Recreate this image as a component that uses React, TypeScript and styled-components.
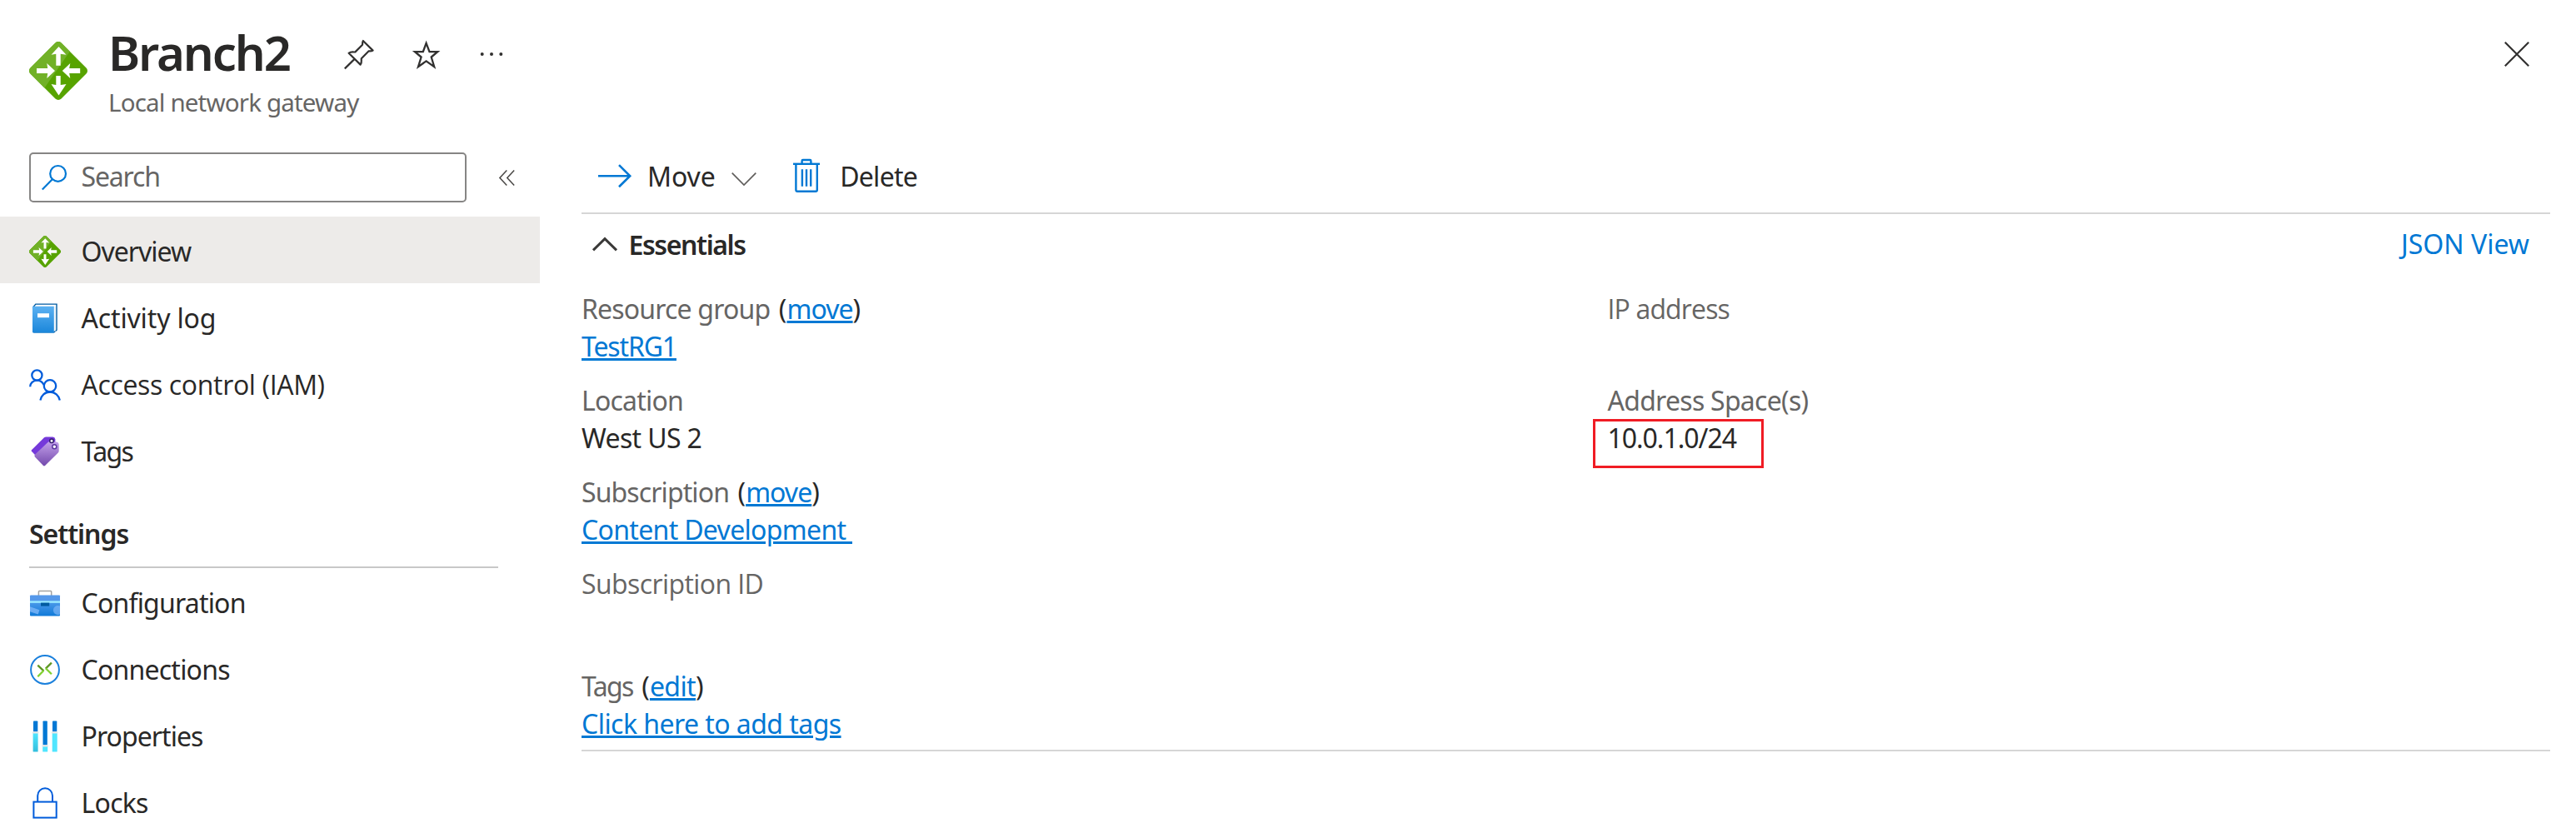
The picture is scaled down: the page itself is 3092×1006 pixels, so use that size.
import React from "react";
import styled, { createGlobalStyle } from "styled-components";

const ink = "#292827";
const muted = "#666564";
const link = "#0078d4";
const outline = "#005cdb";

const GlobalStyle = createGlobalStyle`
  *, *::before, *::after { box-sizing: border-box; }
  body {
    margin: 0;
    background: #fff;
    color: ${ink};
    font-family: "Noto Sans", "Open Sans", sans-serif;
    font-size: 32px;
    line-height: 45px;
  }
  svg { display: block; flex: none; overflow: visible; }
`;

const Page = styled.div`
  width: 3092px;
  height: 1006px;
  overflow: hidden;
  display: flex;
  flex-direction: column;
`;

const Text = styled.span<{ $track?: number; $plainCaps?: boolean }>`
  letter-spacing: ${(p) => p.$track ?? 0}px;
  font-family: ${(p) => (p.$plainCaps ? '"Open Sans", sans-serif' : "inherit")};
  white-space: pre;
`;

/* ---------- header ---------- */

const Header = styled.header`
  display: flex;
  align-items: flex-start;
  height: 183px;
  padding: 23px 56px 0 35px;
`;

const HeaderLogo = styled.div`
  width: 95px;
  padding-top: 27px;
`;

const Heading = styled.div`
  display: flex;
  flex-direction: column;
  flex: 1;
`;

const TitleRow = styled.div`
  display: flex;
  align-items: flex-start;
  height: 79px;
`;

const Title = styled.h1`
  margin: 0;
  width: 283px;
  font-size: 58px;
  line-height: 79px;
  font-weight: 600;
  letter-spacing: -2.1px;
`;

const Actions = styled.div`
  display: flex;
  align-items: center;
  gap: 44.5px;
  padding-top: 24px;
`;

const Subtitle = styled.div`
  font-size: 29.5px;
  line-height: 41px;
  letter-spacing: -0.82px;
  color: ${muted};
`;

const CloseButton = styled.div`
  padding-top: 27px;
`;

/* ---------- sidebar ---------- */

const Body = styled.div`
  display: flex;
  flex: 1;
  min-height: 0;
`;

const Sidebar = styled.aside`
  width: 648px;
  flex: none;
`;

const SearchRow = styled.div`
  display: flex;
  align-items: center;
  height: 60px;
  margin-bottom: 17px;
  padding-left: 35px;
  gap: 39px;
`;

const SearchBox = styled.div`
  display: flex;
  align-items: center;
  width: 525px;
  height: 60px;
  padding-left: 13px;
  border: 2px solid #868584;
  border-radius: 5px;
  color: ${muted};
`;

const SearchText = styled(Text)`
  margin-left: 17.5px;
  padding-bottom: 3px;
`;

const NavItem = styled.div<{ $selected?: boolean }>`
  display: flex;
  align-items: center;
  gap: 24.5px;
  height: 80px;
  padding: 3px 0 0 35px;
  background: ${(p) => (p.$selected ? "#edebe9" : "transparent")};
`;

const SectionHeading = styled.div`
  width: 563px;
  height: 102px;
  margin-left: 35px;
  padding-top: 38px;
  border-bottom: 2px solid #c8c8c8;
  font-weight: 600;
`;

/* ---------- main pane ---------- */

const Main = styled.main`
  width: 2363px;
  margin-left: 50px;
`;

const Toolbar = styled.div`
  display: flex;
  align-items: center;
  height: 74px;
  padding: 0 0 15px 20px;
  border-bottom: 2px solid #d6d6d6;
`;

const Command = styled.div`
  display: flex;
  align-items: center;
  margin-right: 44px;
`;

const CommandLabel = styled(Text)<{ $gap: number }>`
  margin-left: ${(p) => p.$gap}px;
`;

const CommandChevron = styled.div`
  padding: 7px 0 0 19.5px;
`;

const CommandIcon = styled.div`
  padding-bottom: 2px;
`;

const EssentialsBar = styled.div`
  display: flex;
  align-items: center;
  height: 73px;
  margin-bottom: 18px;
  padding: 0 25px 0 13px;
`;

const EssentialsTitle = styled(Text)`
  flex: 1;
  margin-left: 13.5px;
  font-weight: 600;
`;

const JsonLink = styled(Text)`
  padding-bottom: 2px;
  color: ${link};
`;

const Properties = styled.div`
  display: grid;
  grid-template-columns: 1231.5px 1fr;
  height: 554px;
  border-bottom: 2px solid #d6d6d6;
`;

const Column = styled.div`
  display: flex;
  flex-direction: column;
  gap: 20px;
`;

const FieldBlock = styled.div<{ $spaced?: boolean }>`
  display: flex;
  flex-direction: column;
  align-items: flex-start;
  height: 90px;
  margin-top: ${(p) => (p.$spaced ? 13 : 0)}px;
`;

const FieldLabel = styled.div`
  display: flex;
  color: ${muted};
`;

const FieldAction = styled.span`
  margin-left: 10.5px;
  color: ${ink};
`;

const Link = styled.a<{ $track: number }>`
  color: ${link};
  letter-spacing: ${(p) => p.$track}px;
  white-space: pre;
  text-decoration: underline;
  text-decoration-thickness: 3px;
  text-underline-offset: 2px;
`;

const Highlighted = styled.div`
  position: relative;
`;

const HighlightBox = styled.div`
  position: absolute;
  top: 0;
  left: -17.5px;
  width: 205px;
  height: 59px;
  border: 3px solid #f01c24;
`;

/* ---------- icons ---------- */

function GatewayIcon({ size, id }: { size: number; id: string }) {
  return (
    <svg width={size} height={size} viewBox="0 0 70 70">
      <clipPath id={id}>
        <rect x="8.8" y="8.8" width="52.4" height="52.4" rx="5" transform="rotate(45 35 35)" />
      </clipPath>
      <g clipPath={`url(#${id})`}>
        <rect width="70" height="70" fill="#57a300" />
        <path d="M0 0H57L14 62L0 70Z" fill="#71b127" />
      </g>
      <g fill="#fff">
        <path d="M35.5 6L44.5 15.7L37.7 14.8V28.7H32.3V14.8L26.5 15.7Z" />
        <path d="M35.5 64.5L44.5 51L37.7 52V41H32.3V52L26.5 51Z" />
        <path d="M31 35L21.3 44L22.2 38H9V32H22.2L21.3 26Z" />
        <path d="M39.8 35L49.3 44L48.2 38H61.2V32H48.2L49.3 26Z" />
      </g>
    </svg>
  );
}

const PinIcon = () => (
  <svg width="36" height="36" viewBox="0 0 36 36" fill="none" stroke="#323130" strokeWidth="2.2">
    <path
      d="M22.8 2L34.6 13.6C32.6 14.8 31 14.2 29.4 14.4L20.8 23.2C20.4 25.8 21.8 27.6 19.6 30.6L5.6 16.8C8.2 14.6 10.6 15.8 13.4 15.4L22 6.8C22.4 5.2 21.6 3.8 22.8 2Z"
      strokeLinejoin="round"
    />
    <path d="M12.8 23.6L0.8 35.4" />
  </svg>
);

const StarIcon = () => (
  <svg width="36" height="36" viewBox="0 0 36 36" fill="none" stroke="#323130" strokeWidth="2.3">
    <path
      d="M17.6 4.8L21.5 15.2H31.2L23.7 21.5L27.2 33.2L17.6 26.4L8 33.2L11.6 21.5L4 15.2H13.8Z"
      strokeMiterlimit="10"
    />
  </svg>
);

const MoreIcon = () => (
  <svg width="32" height="6" viewBox="0 0 32 6" fill="#323130">
    <circle cx="4.7" cy="3" r="2" />
    <circle cx="16" cy="3" r="2" />
    <circle cx="27.3" cy="3" r="2" />
  </svg>
);

const CloseIcon = () => (
  <svg width="30" height="30" viewBox="0 0 30 30" fill="none" stroke="#323130" strokeWidth="2.2">
    <path d="M0.8 0.8L29.2 29.2M29.2 0.8L0.8 29.2" />
  </svg>
);

const SearchIcon = () => (
  <svg width="30" height="30" viewBox="0 0 30 30" fill="none" stroke={link} strokeWidth="2.2">
    <circle cx="19.6" cy="10.4" r="9.4" />
    <path d="M12.8 17.2L0.8 29.4" />
  </svg>
);

const CollapseIcon = () => (
  <svg width="19" height="19" viewBox="0 0 19 19" fill="none" stroke="#484644" strokeWidth="1.5">
    <path d="M9.3 0.5L0.9 9.5L9.3 18.5M18.2 0.5L9.8 9.5L18.2 18.5" />
  </svg>
);

const BookIcon = () => (
  <svg width="38" height="38" viewBox="0 0 38 38">
    <defs>
      <linearGradient id="book" x1="0" y1="0" x2="0" y2="1">
        <stop offset="0" stopColor="#5bb1f2" />
        <stop offset="1" stopColor="#1a86da" />
      </linearGradient>
    </defs>
    <path d="M4.6 6L7.8 2.1H33V33.2L29.8 35.9H6Z" fill="#fff" stroke="#005ba1" strokeWidth="1.4" />
    <path d="M31.2 5V35" stroke="#d5e6f3" strokeWidth="0.8" />
    <path d="M4 4.8H29.8V36.6H5Q4 36.6 4 35.6Z" fill="url(#book)" />
    <rect x="10" y="13.2" width="14" height="5" fill="#fff" />
  </svg>
);

const PeopleIcon = () => (
  <svg width="38" height="38" viewBox="0 0 38 38" fill="none" stroke={outline} strokeWidth="2.3">
    <circle cx="9.4" cy="7.5" r="6.1" />
    <circle cx="25" cy="20.3" r="7.2" />
    <path d="M1.2 21.3C1.2 17 4.6 13.6 9.4 13.6C13.2 13.6 16.2 15.8 17.6 19" />
    <path d="M13.4 37.5C14.4 31.6 19 27.5 25 27.5S35.6 31.6 36.8 37.5" />
  </svg>
);

const TagIcon = () => (
  <svg width="38" height="38" viewBox="0 0 38 38">
    <defs>
      <linearGradient id="tag" x1="0" y1="0" x2="0" y2="1">
        <stop offset="0" stopColor="#c3a0ea" />
        <stop offset="1" stopColor="#7349ac" />
      </linearGradient>
    </defs>
    <path
      d="M2.9 17.2L18 2.2Q19 1.4 20.2 1.4H28.4Q31 1.6 31.4 4.4V12L8.4 24.4L2.9 18.8Q2.2 18 2.9 17.2Z"
      fill="#7539da"
    />
    <path
      d="M6.9 22.7L22.4 7.9Q23.4 7 25 7.1L32.4 7.4Q35.5 7.7 35.7 10.6V18.4Q35.6 19.6 34.8 20.4L19 36.1Q18 37 17 36.1L6.9 25.4Q5.8 24 6.9 22.7Z"
      fill="url(#tag)"
    />
    <circle cx="27" cy="6.3" r="2.3" fill="#fff" stroke="#341a6e" strokeWidth="1.5" />
    <circle cx="30.3" cy="13.2" r="2.5" fill="#fff" stroke="#5c37a0" strokeWidth="1.5" />
  </svg>
);

const ToolboxIcon = () => (
  <svg width="38" height="38" viewBox="0 0 38 38">
    <defs>
      <linearGradient id="box" x1="0" y1="0" x2="0" y2="1">
        <stop offset="0" stopColor="#4a98e9" />
        <stop offset="1" stopColor="#0f7ad8" />
      </linearGradient>
    </defs>
    <path d="M11.4 10V5.4Q11.4 4.5 12.3 4.5H25.8Q26.7 4.5 26.7 5.4V10" fill="none" stroke="#a3a3a3" strokeWidth="1.5" />
    <path d="M1 10.5Q1 9.5 2 9.5H36Q37 9.5 37 10.5V17H1Z" fill="#5598ea" />
    <path d="M1 18H37V33.6Q37 34.6 36 34.6H2Q1 34.6 1 33.6Z" fill="url(#box)" />
    <rect x="1" y="16.4" width="36" height="2.4" fill="#9cebff" />
    <rect x="14" y="18.6" width="10.2" height="4" fill="#005ba1" />
    <path d="M1 23.2L12.4 27.2L10.7 32.6L1 29.2Z" fill="#83b9f9" opacity="0.75" />
    <path d="M37 22.5A5.6 5.6 0 1 0 37 32.6Z" fill="#83b9f9" opacity="0.65" />
  </svg>
);

const ConnectionsIcon = () => (
  <svg width="38" height="38" viewBox="0 0 38 38" fill="none">
    <circle cx="19" cy="19" r="16.9" stroke="#1b80dc" strokeWidth="2" />
    <g strokeWidth="2.3">
      <path d="M10.3 13.6L17.4 20.4" stroke="#5e9624" />
      <path d="M17.4 20L10.3 27.2" stroke="#7fd02f" />
      <path d="M26.9 10.6L19.8 17.6" stroke="#5e9624" />
      <path d="M19.8 17.2L26.9 24.2" stroke="#7fd02f" />
    </g>
  </svg>
);

const PropertiesIcon = () => (
  <svg width="38" height="38" viewBox="0 0 38 38">
    <defs>
      <linearGradient id="slider" x1="0" y1="0" x2="0" y2="1">
        <stop offset="0" stopColor="#50e6ff" />
        <stop offset="1" stopColor="#32bedd" />
      </linearGradient>
    </defs>
    <g fill="#0078d4">
      <rect x="5" y="0.5" width="5.3" height="13" rx="0.8" />
      <rect x="16.5" y="0.5" width="5.3" height="29" rx="0.8" />
      <rect x="28" y="0.5" width="5.3" height="13" rx="0.8" />
    </g>
    <rect x="4.6" y="15" width="6" height="22.5" rx="0.6" fill="url(#slider)" />
    <rect x="16.2" y="31" width="6" height="6.5" rx="0.6" fill="#50e6ff" />
    <rect x="27.7" y="15" width="6" height="22.5" rx="0.6" fill="#50e6ff" />
    <g fill="#e6e6e6">
      <rect x="3.9" y="13.3" width="7.6" height="2.2" rx="0.8" />
      <rect x="15.3" y="29.3" width="7.6" height="2.2" rx="0.8" />
      <rect x="26.8" y="13.3" width="7.6" height="2.2" rx="0.8" />
    </g>
  </svg>
);

const LockIcon = () => (
  <svg width="38" height="38" viewBox="0 0 38 38" fill="none" stroke={outline} strokeWidth="2">
    <rect x="5.4" y="17.6" width="27.3" height="19" />
    <path d="M10.2 17V10.2A8.9 8.9 0 0 1 28 10.2V17" />
  </svg>
);

const ArrowIcon = () => (
  <svg width="40" height="28" viewBox="0 0 40 28" fill="none" stroke={link} strokeWidth="2.6">
    <path d="M0 14.3H38M25 1.2L38.2 14.3L25 27.2" />
  </svg>
);

const ChevronDown = () => (
  <svg width="30" height="16" viewBox="0 0 30 16" fill="none" stroke="#605e5c" strokeWidth="1.7">
    <path d="M0.7 0.7L15 15L29.3 0.7" />
  </svg>
);

const ChevronUp = () => (
  <svg width="30" height="17" viewBox="0 0 30 17" fill="none" stroke="#3b3a39" strokeWidth="3">
    <path d="M1 15.4L15 1.6L29 15.4" />
  </svg>
);

const TrashIcon = () => (
  <svg width="32" height="40" viewBox="0 0 32 40" fill="none" stroke={link} strokeWidth="2.4">
    <path d="M0 5.8H32" />
    <path d="M10.6 5.3V2.2Q10.6 1 11.8 1H20.2Q21.4 1 21.4 2.2V5.3" />
    <path d="M3.4 6V37Q3.4 38.8 5.2 38.8H27Q28.8 38.8 28.8 37V6" />
    <path d="M10.9 12.3V32.7M16 12.3V32.7M21.2 12.3V32.7" />
  </svg>
);

/* ---------- data ---------- */

interface NavEntry {
  label: string;
  track: number;
  icon: React.ReactNode;
  selected?: boolean;
  plainCaps?: boolean;
}

const resourceNav: NavEntry[] = [
  { label: "Overview", track: -1, icon: <GatewayIcon size={38} id="gateway-nav" />, selected: true },
  { label: "Activity log", track: -0.15, icon: <BookIcon /> },
  { label: "Access control (IAM)", track: -0.33, icon: <PeopleIcon />, plainCaps: true },
  { label: "Tags", track: -1.6, icon: <TagIcon /> },
];

const settingsNav: NavEntry[] = [
  { label: "Configuration", track: -0.8, icon: <ToolboxIcon /> },
  { label: "Connections", track: -0.78, icon: <ConnectionsIcon /> },
  { label: "Properties", track: -0.95, icon: <PropertiesIcon /> },
  { label: "Locks", track: -0.75, icon: <LockIcon /> },
];

function NavList({ items }: { items: NavEntry[] }) {
  return (
    <>
      {items.map((item) => (
        <NavItem key={item.label} $selected={item.selected}>
          {item.icon}
          <Text $track={item.track} $plainCaps={item.plainCaps}>{item.label}</Text>
        </NavItem>
      ))}
    </>
  );
}

interface FieldProps {
  label: string;
  track: number;
  action?: string;
  actionTrack?: number;
  spaced?: boolean;
  plainCaps?: boolean;
  children?: React.ReactNode;
}

function Field({ label, track, action, actionTrack = -0.95, spaced, plainCaps, children }: FieldProps) {
  return (
    <FieldBlock $spaced={spaced}>
      <FieldLabel>
        <Text $track={track} $plainCaps={plainCaps}>{label}</Text>
        {action && (
          <FieldAction>
            (<Link $track={actionTrack}>{action}</Link>)
          </FieldAction>
        )}
      </FieldLabel>
      {children}
    </FieldBlock>
  );
}

export default function App() {
  return (
    <Page>
      <GlobalStyle />
      <Header>
        <HeaderLogo>
          <GatewayIcon size={70} id="gateway-header" />
        </HeaderLogo>
        <Heading>
          <TitleRow>
            <Title>Branch2</Title>
            <Actions>
              <PinIcon />
              <StarIcon />
              <MoreIcon />
            </Actions>
          </TitleRow>
          <Subtitle>Local network gateway</Subtitle>
        </Heading>
        <CloseButton>
          <CloseIcon />
        </CloseButton>
      </Header>

      <Body>
        <Sidebar>
          <SearchRow>
            <SearchBox>
              <SearchIcon />
              <SearchText $track={-1.15}>Search</SearchText>
            </SearchBox>
            <CollapseIcon />
          </SearchRow>
          <NavList items={resourceNav} />
          <SectionHeading>
            <Text $track={-1.05}>Settings</Text>
          </SectionHeading>
          <NavList items={settingsNav} />
        </Sidebar>

        <Main>
          <Toolbar>
            <Command>
              <CommandIcon>
                <ArrowIcon />
              </CommandIcon>
              <CommandLabel $gap={19} $track={-0.1}>Move</CommandLabel>
              <CommandChevron>
                <ChevronDown />
              </CommandChevron>
            </Command>
            <Command>
              <CommandIcon>
                <TrashIcon />
              </CommandIcon>
              <CommandLabel $gap={24} $track={-0.72}>Delete</CommandLabel>
            </Command>
          </Toolbar>

          <EssentialsBar>
            <ChevronUp />
            <EssentialsTitle $track={-1.4}>Essentials</EssentialsTitle>
            <JsonLink $track={0}>JSON View</JsonLink>
          </EssentialsBar>

          <Properties>
            <Column>
              <Field label="Resource group" track={-0.82} action="move">
                <Link $track={-1.15}>TestRG1</Link>
              </Field>
              <Field label="Location" track={-0.8}>
                <Text $track={-0.63}>West US 2</Text>
              </Field>
              <Field label="Subscription" track={-0.9} action="move">
                <Link $track={-0.68}>{"Content Development "}</Link>
              </Field>
              <Field label="Subscription ID" track={-0.58} plainCaps />
              <Field label="Tags" track={-1.6} action="edit" actionTrack={-0.6} spaced>
                <Link $track={-0.55}>Click here to add tags</Link>
              </Field>
            </Column>
            <Column>
              <Field label="IP address" track={-0.85} plainCaps />
              <Field label="Address Space(s)" track={-0.73}>
                <Highlighted>
                  <Text $track={-1.03}>10.0.1.0/24</Text>
                  <HighlightBox />
                </Highlighted>
              </Field>
            </Column>
          </Properties>
        </Main>
      </Body>
    </Page>
  );
}
